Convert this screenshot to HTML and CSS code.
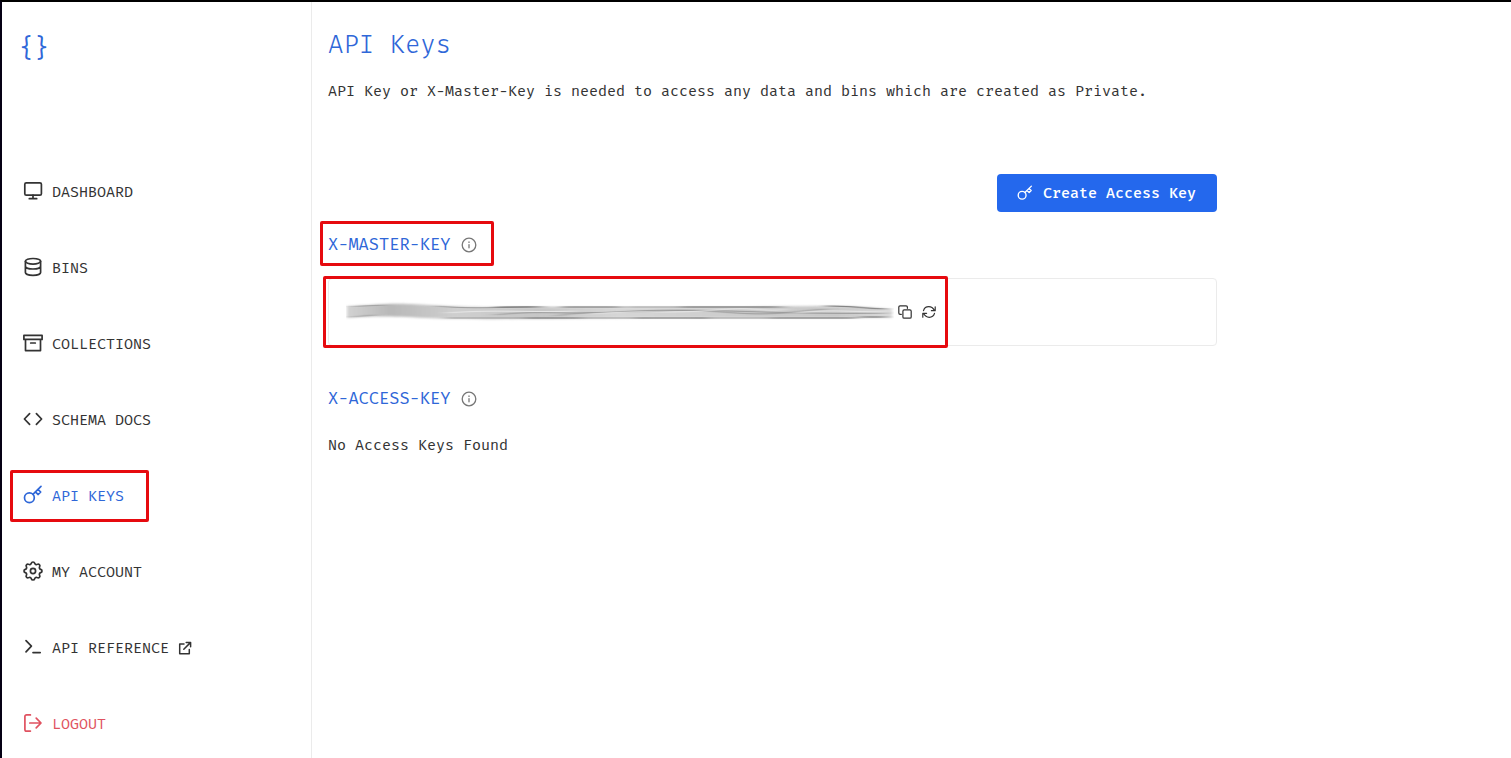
FILE: index.html
```
<!DOCTYPE html>
<html lang="en">
<head>
  <meta charset="UTF-8">
  <meta name="viewport" content="width=device-width, initial-scale=1.0">
  <title>API Keys</title>
  <link rel="stylesheet" href="styles.css">
</head>
<body>
  <aside class="sidebar">
    <a class="logo" href="#">{}</a>

    <nav class="menu">
      <a class="menu-item" href="#">
        <svg class="icon" viewBox="0 0 20 20"><rect x="1.8" y="1.8" width="16.6" height="12.4" rx="1.5"/><path d="M10 14.2v3.3M6.3 17.7h7.4"/></svg>
        <span>DASHBOARD</span>
      </a>
      <a class="menu-item" href="#">
        <svg class="icon" viewBox="0 0 20 20"><ellipse cx="10" cy="4.3" rx="7.6" ry="2.8"/><path d="M2.4 4.3v11.2c0 1.6 3.4 2.8 7.6 2.8s7.6-1.2 7.6-2.8V4.3M2.4 9.2c0 1.6 3.4 2.8 7.6 2.8s7.6-1.2 7.6-2.8"/></svg>
        <span>BINS</span>
      </a>
      <a class="menu-item" href="#">
        <svg class="icon" viewBox="0 0 20 20"><path d="M.9 2.4h18.2v4H.9zM2.5 6.4v11.2h15V6.4M7.7 10h4.6"/></svg>
        <span>COLLECTIONS</span>
      </a>
      <a class="menu-item" href="#">
        <svg class="icon" viewBox="0 0 20 20"><path d="M6.6 4.6 1.4 10l5.2 5.4M13.4 4.6l5.2 5.4-5.2 5.4"/></svg>
        <span>SCHEMA DOCS</span>
      </a>
      <a class="menu-item active marked" href="#">
        <svg class="icon" viewBox="0 0 20 20"><circle cx="6.4" cy="12.8" r="4.9"/><path d="M9.9 9.3 18 1.4M14.9 4.4l2.8 2.6-2.5 2.5-2.9-2.6"/></svg>
        <span>API KEYS</span>
      </a>
      <a class="menu-item" href="#">
        <svg class="icon gear" viewBox="2 2 20 20"><path d="M10.325 4.317c.426-1.756 2.924-1.756 3.35 0a1.724 1.724 0 0 0 2.573 1.066c1.543-.94 3.31.826 2.37 2.37a1.724 1.724 0 0 0 1.065 2.572c1.756.426 1.756 2.924 0 3.35a1.724 1.724 0 0 0-1.066 2.573c.94 1.543-.826 3.31-2.37 2.37a1.724 1.724 0 0 0-2.572 1.065c-.426 1.756-2.924 1.756-3.35 0a1.724 1.724 0 0 0-2.573-1.066c-1.543.94-3.31-.826-2.37-2.37a1.724 1.724 0 0 0-1.065-2.572c-1.756-.426-1.756-2.924 0-3.35a1.724 1.724 0 0 0 1.066-2.573c-.94-1.543.826-3.31 2.37-2.37 1 .608 2.296.07 2.572-1.065z"/><circle cx="12" cy="12" r="2.6"/></svg>
        <span>MY ACCOUNT</span>
      </a>
      <a class="menu-item" href="#">
        <svg class="icon" viewBox="0 0 20 20"><path d="m3 3.6 5.4 5.6L3 14.8M10 15.6h7.2"/></svg>
        <span>API REFERENCE</span>
        <svg class="icon icon-small" viewBox="0 0 14 14"><path d="M6 3H1.7v9.7h9.6V8.4M8.2 1.4h4.4v4.4M12.4 1.6 5.8 8.2"/></svg>
      </a>
      <a class="menu-item logout" href="#">
        <svg class="icon" viewBox="0 0 20 20"><path d="M7.4 1.9H3.6c-1 0-1.7.7-1.7 1.7v12.8c0 1 .7 1.7 1.7 1.7h3.8M6.8 10h11M13.2 5.2 18 10l-4.8 4.8"/></svg>
        <span>LOGOUT</span>
      </a>
    </nav>
  </aside>

  <main class="content">
    <h1>API Keys</h1>
    <p>API Key or X-Master-Key is needed to access any data and bins which are created as Private.</p>

    <div class="actions">
      <button class="create-button" type="button">
        <svg class="icon" viewBox="0 0 20 20"><circle cx="6.4" cy="12.8" r="4.9"/><path d="M9.9 9.3 18 1.4M14.9 4.4l2.8 2.6-2.5 2.5-2.9-2.6"/></svg>
        <span>Create Access Key</span>
      </button>
    </div>

    <h2 class="marked">
      <span>X-MASTER-KEY</span>
      <svg class="icon info" viewBox="0 0 16 16"><circle cx="8" cy="8" r="6.8"/><path d="M8 7.6v3.2M8 5v.4"/></svg>
    </h2>

    <div class="key-card">
      <div class="key-value marked">
        <!-- Scribbled out key -->
        <svg class="scribble" viewBox="0 0 548 22" preserveAspectRatio="none" aria-label="Hidden key">
          <defs>
            <linearGradient id="smear" x1="0" x2="1" y1="0" y2="0">
              <stop offset="0" stop-color="#d2d2d2"/>
              <stop offset=".08" stop-color="#b8b8b8"/>
              <stop offset=".2" stop-color="#cfcfcf"/>
              <stop offset=".35" stop-color="#c6c6c6"/>
              <stop offset=".5" stop-color="#d6d6d6"/>
              <stop offset=".75" stop-color="#cbcbcb"/>
              <stop offset=".9" stop-color="#c8c8c8"/>
              <stop offset="1" stop-color="#dadada"/>
            </linearGradient>
            <filter id="soft" x="-2%" y="-30%" width="104%" height="160%"><feGaussianBlur stdDeviation="1.5 1.2"/></filter>
            <filter id="soft-line" x="-2%" y="-50%" width="104%" height="200%"><feGaussianBlur stdDeviation="6 .5"/></filter>
          </defs>
          <path fill="url(#smear)" filter="url(#soft)" d="M1 5C30 4 40 2 65 3S110 6 150 6H400C450 5 500 4 546 8V17H300C200 18 120 19 80 17S30 15 1 17Z"/>
          <g class="strands" filter="url(#soft-line)">
            <path d="M6 6C12 5 20 5 40 4M6 16C12 16 20 14 30 14M90 5C130 9 170 5 200 6"/>
            <path class="dark" d="M150 6H190M215 6H275M180 17H235M290 17H362M335 6H430M425 17H510M480 5C510 5 524 8 540 8M514 16H540"/>
            <path d="M150 14C190 9 220 14 270 11S350 9 390 12 450 10 480 8M210 15C240 9 280 13 320 10S430 14 540 12M280 6H440M350 17H430M100 17H190M230 17H300"/>
          </g>
          <path class="light" filter="url(#soft-line)" d="M100 12C150 8 190 12 230 10M245 13C290 9 330 13 370 9S420 12 440 8M450 12C480 8 510 11 540 11"/>
        </svg>
        <button class="icon-button" type="button" aria-label="Copy key">
          <svg class="icon icon-small" viewBox="0 0 14 14"><rect x="4.9" y="4.9" width="8.3" height="8.3" rx="1.3"/><path d="M3.3 9.4H2.1C1.3 9.4.8 8.9.8 8.1V2.1C.8 1.3 1.3.8 2.1.8h6c.8 0 1.3.5 1.3 1.3v1.2"/></svg>
        </button>
        <button class="icon-button" type="button" aria-label="Regenerate key">
          <svg class="icon icon-small" viewBox="0 0 14 14"><path d="M1.5 5.6C2.2 3.2 4.3 1.7 6.8 1.7c2.3 0 4.2 1.2 5.6 3.8M13.2 1.8v3.9H9.4M12.5 8.4c-.7 2.4-2.8 3.9-5.3 3.9-2.3 0-4.2-1.2-5.6-3.8M.8 12.2V8.3h3.8"/></svg>
        </button>
      </div>
    </div>

    <h2 class="access-heading">
      <span>X-ACCESS-KEY</span>
      <svg class="icon info" viewBox="0 0 16 16"><circle cx="8" cy="8" r="6.8"/><path d="M8 7.6v3.2M8 5v.4"/></svg>
    </h2>
    <p class="empty">No Access Keys Found</p>
  </main>
</body>
</html>
```
FILE: styles.css
```
* {
  box-sizing: border-box;
}

body {
  margin: 0;
  min-height: 100vh;
  display: flex;
  border-top: 2px solid #000;
  border-left: 2px solid #050014;
  background: #fff;
  color: #333;
  font-family: "Fira Mono", "Liberation Mono", monospace;
  font-size: 15px;
  line-height: 26px;
}

a {
  color: inherit;
  text-decoration: none;
}

.icon {
  width: 20px;
  height: 20px;
  flex: none;
  fill: none;
  stroke: currentColor;
  stroke-width: 1.7;
  stroke-linecap: round;
  stroke-linejoin: round;
}

.icon-small {
  width: 14px;
  height: 14px;
  stroke-width: 1.2;
}

/* Sidebar */
.sidebar {
  flex: none;
  width: 310px;
  border-right: 1px solid #ebebeb;
}

.logo {
  display: block;
  width: 48px;
  margin: 30px 0 102px 17px;
  color: #2f67d8;
  font-size: 25px;
  line-height: 32px;
}

.menu {
  display: flex;
  flex-direction: column;
  align-items: flex-start;
  gap: 24px;
  padding-left: 8px;
}

.menu-item {
  display: flex;
  align-items: center;
  gap: 9px;
  height: 52px;
  padding: 0 13px;
}

.menu-item .icon {
  margin-bottom: 2px;
}

.menu-item .icon-small {
  margin-bottom: 0;
  stroke-width: 1.5;
}

.menu-item.active {
  color: #2f67d8;
}

.menu-item.logout {
  color: #e05260;
}

/* Red highlight boxes */
.marked {
  position: relative;
}

.marked::after {
  content: "";
  position: absolute;
  inset: 0;
  border: 3px solid #e60a0f;
  border-radius: 2px;
  pointer-events: none;
}

.menu-item.marked::after {
  right: -12px;
}

/* Content */
.content {
  flex: 1;
  min-width: 0;
  max-width: 922px;
  padding: 28px 17px 28px 16px;
}

h1 {
  margin: 0 0 16px;
  color: #2f67d8;
  font-family: "Fira Code", "Fira Mono", "Liberation Mono", monospace;
  font-size: 25px;
  font-weight: 300;
  line-height: 32px;
}

p {
  margin: 0;
}

.actions {
  display: flex;
  justify-content: flex-end;
  margin-top: 70px;
}

.create-button {
  display: flex;
  align-items: center;
  gap: 10px;
  height: 38px;
  padding: 0 21px 0 20px;
  border: 0;
  border-radius: 4px;
  background: #2468ed;
  color: #fff;
  font-family: inherit;
  font-size: 15px;
  font-weight: 500;
  cursor: pointer;
}

.create-button .icon {
  width: 16px;
  height: 16px;
}

h2 {
  display: flex;
  align-items: center;
  gap: 11px;
  width: fit-content;
  margin: 20px 0;
  color: #2f67d8;
  font-size: 17px;
  font-weight: 400;
}

h2.marked::after {
  inset: -11px -17px -8px -8px;
}

.info {
  width: 16px;
  height: 16px;
  color: #777;
  stroke-width: 1.3;
}

.key-card {
  display: flex;
  align-items: center;
  height: 68px;
  padding: 0 17px;
  border: 1px solid #ebebeb;
  border-radius: 4px;
}

.key-value {
  display: flex;
  align-items: center;
  gap: 10px;
  min-width: 0;
}

.key-value.marked::after {
  inset: -25px -12px -25px -23px;
}

.scribble {
  flex: 0 1 548px;
  min-width: 0;
  height: 22px;
  margin-right: -6px;
}

.strands path {
  fill: none;
  stroke: #999;
}

.strands .dark {
  stroke: #666;
}

.light {
  fill: none;
  stroke: #e8e8e8;
}

.icon-button {
  display: flex;
  padding: 0;
  border: 0;
  background: none;
  color: #333;
  cursor: pointer;
}

.access-heading {
  margin-top: 40px;
}
```
